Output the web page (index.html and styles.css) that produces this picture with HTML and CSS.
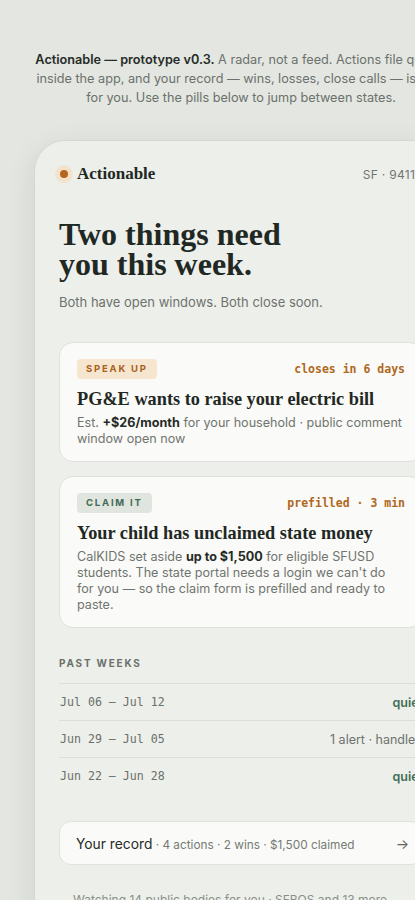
FILE: index.html
```html
<!DOCTYPE html>
<html lang="en">
<head>
<meta charset="utf-8">
<title>Actionable — prototype</title>
<link rel="stylesheet" href="styles.css">
</head>
<body>
<div class="stage">
  <p class="intro"><b>Actionable — prototype v0.3.</b> A radar, not a feed. Actions file quietly inside the app, and your record — wins, losses, close calls — is kept for you. Use the pills below to jump between states.</p>

  <div class="phone">
    <header class="bar">
      <div class="brand"><span class="dot"></span><span class="brand-name">Actionable</span></div>
      <span class="loc">SF · 94110</span>
    </header>

    <h1 class="title">Two things need you this week.</h1>
    <p class="sub">Both have open windows. Both close soon.</p>

    <div class="cards">
      <article class="card">
        <div class="card-top">
          <span class="pill pill-speak">SPEAK UP</span>
          <span class="meta">closes in 6 days</span>
        </div>
        <h2 class="card-title">PG&amp;E wants to raise your electric bill</h2>
        <p class="card-desc">Est. <b>+$26/month</b> for your household · public comment window open now</p>
      </article>

      <article class="card">
        <div class="card-top">
          <span class="pill pill-claim">CLAIM IT</span>
          <span class="meta">prefilled · 3 min</span>
        </div>
        <h2 class="card-title">Your child has unclaimed state money</h2>
        <p class="card-desc">CalKIDS set aside <b>up to $1,500</b> for eligible SFUSD students. The state portal needs a login we can't do for you — so the claim form is prefilled and ready to paste.</p>
      </article>
    </div>

    <section class="past">
      <h3 class="label">PAST WEEKS</h3>
      <div class="row"><span class="date">Jul 06 — Jul 12</span><span class="status quiet">quiet</span></div>
      <div class="row"><span class="date">Jun 29 — Jul 05</span><span class="status">1 alert · handled</span></div>
      <div class="row"><span class="date">Jun 22 — Jun 28</span><span class="status quiet">quiet</span></div>
    </section>

    <a class="record" href="#">
      <span><span class="record-title">Your record</span><span class="record-meta"> · 4 actions · 2 wins · $1,500 claimed</span></span>
      <span class="arrow">→</span>
    </a>

    <p class="foot">Watching 14 public bodies for you · SFBOS and 13 more.</p>
  </div>
</div>
</body>
</html>
```

FILE: styles.css
```css
html, body {
  margin: 0;
  padding: 0;
  overflow-x: hidden;
}
body {
  background: #e3e6e1;
  font-family: Inter, "Noto Sans", sans-serif;
  color: #2a2f2b;
}
.stage {
  width: 482px;
  display: flex;
  flex-direction: column;
  align-items: center;
  padding-top: 50px;
}
.intro {
  width: 424px;
  margin: 0;
  text-align: center;
  font-size: 12.7px;
  line-height: 19px;
  color: #6c716c;
}
.intro b {
  color: #262b27;
  font-weight: 600;
}
.phone {
  width: 412px;
  box-sizing: border-box;
  margin-top: 34px;
  background: #edefeb;
  border-radius: 30px;
  padding: 22px 24px 40px;
  box-shadow: 0 0 0 1px rgba(0, 0, 0, 0.03), 0 8px 30px rgba(30, 40, 30, 0.10);
}
.bar {
  display: flex;
  justify-content: space-between;
  align-items: center;
  height: 22px;
}
.brand {
  display: flex;
  align-items: center;
  gap: 4px;
}
.dot {
  width: 8px;
  height: 8px;
  border-radius: 50%;
  background: #b5651d;
  box-shadow: 0 0 0 5px #f3e3cd;
  margin-left: 1px;
  margin-right: 5px;
}
.brand-name {
  font-family: "Liberation Serif", "DejaVu Serif", serif;
  font-size: 17px;
  font-weight: 600;
  color: #1f2823;
}
.loc {
  font-size: 12px;
  color: #70756f;
  letter-spacing: 0.3px;
}
.title {
  margin: 34px 0 0;
  font-family: "Liberation Serif", "DejaVu Serif", serif;
  font-size: 32px;
  line-height: 30px;
  font-weight: 700;
  color: #1f2823;
  width: 260px;
  letter-spacing: 0;
}
.sub {
  margin: 15px 0 0;
  font-size: 13px;
  line-height: 17px;
  color: #6d726d;
}
.cards {
  display: flex;
  flex-direction: column;
  gap: 14px;
  margin-top: 31px;
}
.card {
  background: #fafaf8;
  border: 1px solid #dfe2dc;
  border-radius: 14px;
  padding: 16px 17px 14px;
}
.card-top {
  display: flex;
  justify-content: space-between;
  align-items: center;
}
.pill {
  font-size: 9.5px;
  font-weight: 700;
  letter-spacing: 1.8px;
  padding: 4px 9px;
  line-height: 12px;
  border-radius: 4px;
}
.pill-speak {
  background: #f6e6cf;
  color: #a8611f;
}
.pill-claim {
  background: #e1e5df;
  color: #3f6b54;
}
.meta {
  font-family: "DejaVu Sans Mono", "Liberation Mono", monospace;
  font-size: 11.5px;
  font-weight: 700;
  color: #b0681d;
}
.card-title {
  margin: 8px 0 0;
  font-family: "Liberation Serif", "DejaVu Serif", serif;
  font-size: 18.3px;
  line-height: 24px;
  font-weight: 600;
  color: #1f2823;
}
.card-desc {
  margin: 4px 0 0;
  font-size: 12.6px;
  line-height: 16px;
  color: #70756f;
}
.card-desc b {
  color: #262b27;
  font-weight: 700;
}
.past {
  margin-top: 29px;
}
.label {
  margin: 0 0 14px;
  font-size: 10px;
  line-height: 12px;
  letter-spacing: 1.8px;
  font-weight: 700;
  color: #6a706a;
}
.row {
  display: flex;
  justify-content: space-between;
  align-items: center;
  height: 36px;
  border-top: 1px solid #dcdfd9;
  font-size: 12.5px;
}
.date {
  font-family: "DejaVu Sans Mono", "Liberation Mono", monospace;
  font-size: 11.6px;
  color: #6a6f69;
  padding-left: 1px;
}
.status {
  color: #6d726d;
}
.status.quiet {
  color: #3f6e55;
  font-weight: 600;
}
.record {
  margin-top: 27px;
  display: flex;
  justify-content: space-between;
  align-items: center;
  height: 44px;
  box-sizing: border-box;
  padding: 0 13px 0 16px;
  background: #fafaf8;
  border: 1px solid #e0e3dd;
  border-radius: 12px;
  text-decoration: none;
}
.record-title {
  font-size: 13.8px;
  color: #262b27;
}
.record-meta {
  font-size: 11.8px;
  color: #757a74;
}
.arrow {
  font-size: 14px;
  color: #5f645e;
}
.foot {
  margin: 27px 0 0;
  padding-left: 14px;
  font-size: 12px;
  color: #8a8f89;
}
```
